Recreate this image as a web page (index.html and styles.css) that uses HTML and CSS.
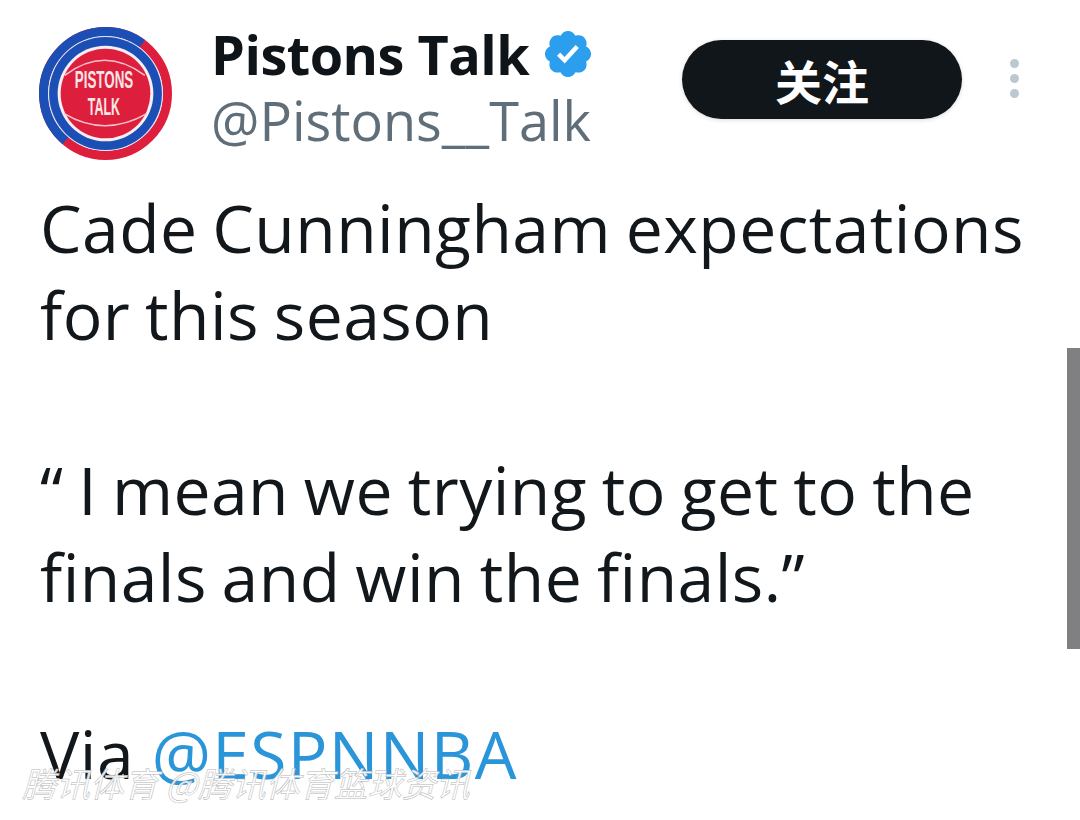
FILE: index.html
```html
<!DOCTYPE html>
<html lang="en">
<head>
<meta charset="utf-8">
<title>Pistons Talk</title>
<link rel="stylesheet" href="styles.css">
</head>
<body>
<main class="tweet">
  <header class="head">
    <svg class="avatar" viewBox="0 0 132 132" aria-hidden="true">
      <circle cx="66" cy="66" r="61.500" fill="none" stroke="#dd1f3d" stroke-width="9"/>
      <circle cx="66" cy="66" r="61.500" fill="none" stroke="#1c4fb5" stroke-width="9" pathLength="360" stroke-dasharray="176 184" transform="rotate(130.400 66 66)"/>
      <circle cx="66" cy="66" r="57" fill="#dfe4f3"/>
      <circle cx="66" cy="66" r="56" fill="#1c4fb5"/>
      <circle cx="66" cy="66" r="47.500" fill="#f6eef0"/>
      <circle cx="66" cy="66" r="44.500" fill="#dd1f3d"/>
      <path d="M25.500 48Q65 18 105 48M25 86Q65 110 107 86" fill="none" stroke="#f3c4cc" stroke-width="1.500"/>
      <text class="logo-text" x="64.500" y="61" textLength="58" lengthAdjust="spacingAndGlyphs">PISTONS</text>
      <text class="logo-text" x="64.500" y="87" textLength="32" lengthAdjust="spacingAndGlyphs">TALK</text>
    </svg>
    <div class="names">
      <div class="name-row">
        <span class="name">Pistons Talk</span>
        <svg class="badge" viewBox="0 0 24 24" aria-hidden="true">
          <path fill="#2b9eee" d="M22.25 12c0-1.43-.88-2.67-2.19-3.34.46-1.39.2-2.9-.81-3.91s-2.52-1.27-3.91-.81C14.67 2.63 13.43 1.75 12 1.75s-2.67.88-3.33 2.19c-1.4-.46-2.91-.2-3.92.81s-1.26 2.52-.8 3.91C2.63 9.33 1.75 10.57 1.75 12s.88 2.67 2.2 3.34c-.46 1.39-.21 2.9.8 3.91s2.52 1.26 3.91.81c.67 1.31 1.91 2.19 3.34 2.19s2.68-.88 3.34-2.19c1.39.45 2.9.2 3.91-.81s1.27-2.52.81-3.91c1.31-.67 2.19-1.91 2.19-3.34z"/>
          <path fill="#fff" d="m10.54 16.2-3.44-3.44 1.41-1.41 1.96 1.96 4.9-5.3 1.47 1.36z"/>
        </svg>
      </div>
      <div class="handle">@Pistons__Talk</div>
    </div>
    <button class="follow">关注</button>
    <div class="more"><i></i><i></i><i></i></div>
  </header>
  <div class="body">
    <p>Cade Cunningham expectations<br>for this season</p>
    <p>“ I mean we trying to get to the<br>finals and win the finals.”</p>
    <p class="last">Via <span class="mention">@ESPNNBA</span></p>
  </div>
</main>
<div class="scrollbar"></div>
<div class="watermark">腾讯体育 @腾讯体育篮球资讯</div>
</body>
</html>
```
FILE: styles.css
```css
html, body {
  margin: 0;
  height: 820px;
  overflow: hidden;
  background: #fff;
}
body {
  position: relative;
  font-family: "Open Sans", "Noto Sans CJK SC", sans-serif;
  color: #12171b;
}
.tweet {
  padding: 27px 0 0 39px;
  height: 793px;
  overflow: hidden;
}
.head {
  display: flex;
  align-items: flex-start;
}
.avatar {
  width: 133px;
  height: 133px;
  flex: none;
}
.logo-text {
  font-family: "Liberation Sans", sans-serif;
  font-size: 23px;
  font-weight: 700;
  fill: #f8e6e6;
  text-anchor: middle;
}
.names {
  margin-left: 39px;
  width: 471px;
  flex: none;
}
.name-row {
  display: flex;
  align-items: center;
  height: 54px;
}
.name {
  font-size: 54px;
  font-weight: 700;
  color: #0f1419;
  letter-spacing: -0.5px;
}
.badge {
  width: 54px;
  height: 54px;
  margin-left: 12px;
}
.handle {
  font-size: 54px;
  line-height: 64px;
  color: #5f6e78;
  margin-top: 7px;
}
.follow {
  width: 280px;
  height: 79px;
  margin-top: 13px;
  border: 0;
  border-radius: 40px;
  background: #11161a;
  color: #fff;
  font-family: "Noto Sans CJK SC", sans-serif;
  font-size: 47px;
  font-weight: 700;
  box-shadow: 0 1px 4px rgba(0, 0, 0, 0.15);
  padding: 0;
}
.more {
  display: flex;
  flex-direction: column;
  gap: 6px;
  margin: 32px 0 0 48px;
}
.more i {
  width: 9px;
  height: 9px;
  border-radius: 50%;
  background: #bcc8cf;
}
.body {
  margin-top: 24px;
  padding-left: 1px;
  font-size: 66px;
  line-height: 87.3px;
  letter-spacing: 0.45px;
  word-spacing: -2.8px;
}
.body p {
  margin: 0 0 87.3px;
}
.body .last {
  margin: 0;
  padding-top: 2px;
}
.mention {
  color: #2a95d8;
  letter-spacing: 1.3px;
  margin-left: 3px;
}
.scrollbar {
  position: absolute;
  right: 0;
  top: 348px;
  width: 13px;
  height: 301px;
  background: #808083;
}
.watermark {
  position: absolute;
  left: 22px;
  top: 763px;
  font-family: "Noto Sans CJK SC", sans-serif;
  font-size: 34px;
  line-height: 40px;
  font-style: italic;
  color: rgba(255, 255, 255, 0.92);
  -webkit-text-stroke: 0.5px #b5b5b5;
  white-space: nowrap;
}
```
